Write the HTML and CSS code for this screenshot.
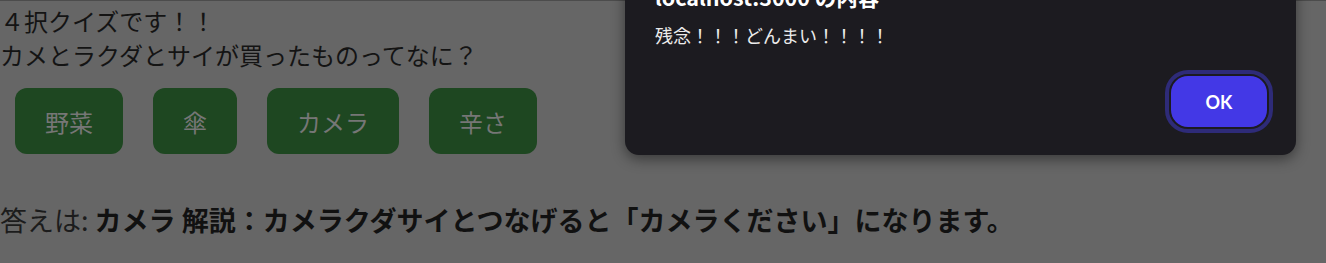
FILE: index.html
```html
<!DOCTYPE html>
<html lang="ja">
<head>
<meta charset="utf-8">
<title>4択クイズ</title>
<link rel="stylesheet" href="styles.css">
</head>
<body>
<div class="page">
  <p class="question">４択クイズです！！<br>カメとラクダとサイが買ったものってなに？</p>
  <div class="choices">
    <button class="choice">野菜</button>
    <button class="choice">傘</button>
    <button class="choice">カメラ</button>
    <button class="choice">辛さ</button>
  </div>
  <p class="answer">答えは: <b>カメラ 解説：カメラクダサイとつなげると「カメラください」になります。</b></p>
</div>
<div class="dialog">
  <div class="dialog-title">localhost:3000 の内容</div>
  <div class="dialog-msg">残念！！！どんまい！！！！</div>
  <div class="dialog-actions">
    <button class="ok">OK</button>
  </div>
</div>
</body>
</html>
```

FILE: styles.css
```css
html, body {
  margin: 0;
  padding: 0;
}
body {
  background: #666666;
  width: 1326px;
  height: 263px;
  overflow: hidden;
  position: relative;
  font-family: "Noto Sans CJK JP", "Noto Sans", sans-serif;
}
.page {
  border-top: 1px solid #4c4c4c;
  padding-top: 3px;
}
.question {
  margin: 0;
  font-size: 24px;
  line-height: 34px;
  color: #141414;
}
.choices {
  display: flex;
  gap: 30px;
  padding: 0 15px;
  margin-top: 16px;
}
.choice {
  height: 66px;
  padding: 0 30px;
  border: none;
  border-radius: 12px;
  background: #1e4721;
  color: #767676;
  font-family: "Noto Sans CJK JP", sans-serif;
  font-size: 24px;
}
.answer {
  margin: 46px 0 0;
  font-size: 27px;
  line-height: 39px;
  color: #1c1c1c;
}
.answer b {
  color: #111;
}
.dialog {
  position: absolute;
  left: 625px;
  top: -37px;
  width: 671px;
  box-sizing: border-box;
  padding: 20px 29px 28px 30px;
  background: #1c1b20;
  border-radius: 0 0 14px 14px;
  box-shadow: 0 4px 14px rgba(0, 0, 0, 0.45);
  color: #ececec;
}
.dialog-title {
  font-size: 21.5px;
  font-weight: bold;
  line-height: 28px;
  color: #ffffff;
}
.dialog-msg {
  margin-top: 12px;
  font-size: 18px;
  line-height: 24px;
}
.dialog-actions {
  display: flex;
  justify-content: flex-end;
  margin-top: 29px;
}
.ok {
  width: 96px;
  height: 51px;
  border: none;
  border-radius: 17px;
  background: #4338e6;
  color: #ffffff;
  font-family: Lato, "Open Sans", sans-serif;
  font-weight: bold;
  font-size: 18px;
  outline: 4px solid #2e2b78;
  outline-offset: 2px;
}
```
